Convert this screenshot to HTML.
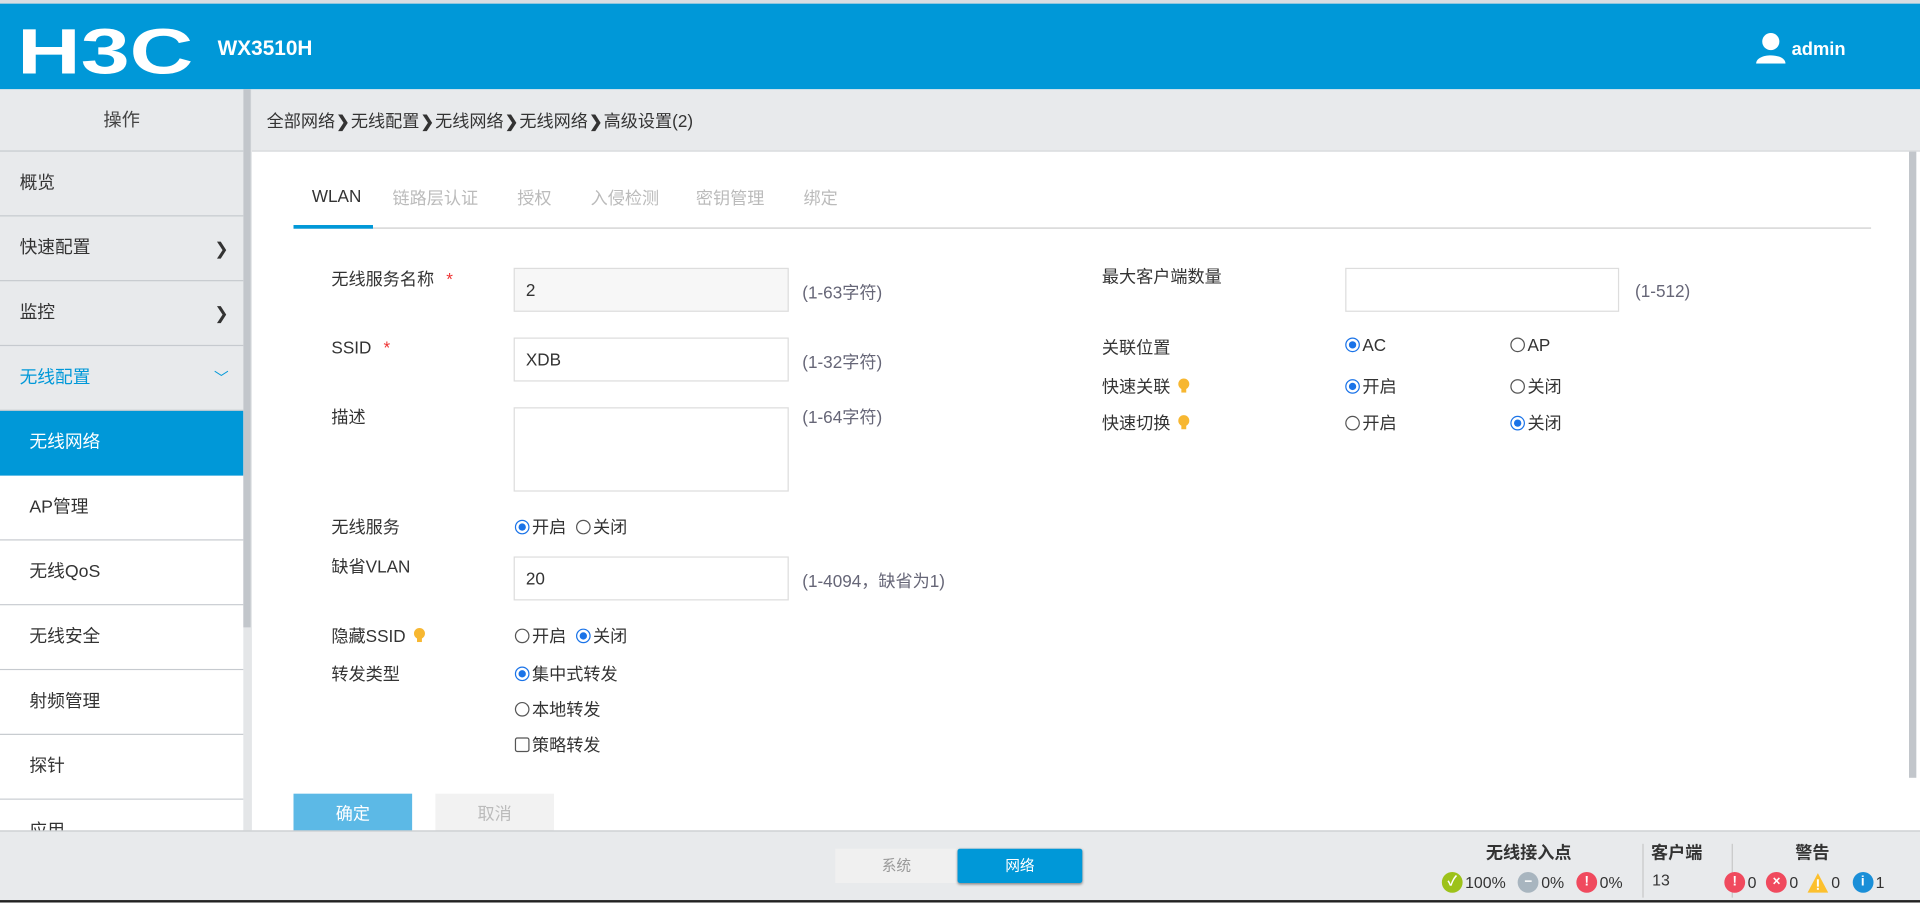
<!DOCTYPE html>
<html><head><meta charset="utf-8"><style>
*{margin:0;padding:0;box-sizing:border-box}
html,body{width:1920px;height:903px;overflow:hidden;background:#fff}
#s{width:1570px;height:738px;transform:scale(1.22293);transform-origin:0 0;position:relative;font-family:"Liberation Sans","Noto Sans CJK SC",sans-serif;font-size:14px;color:#333}
.a{position:absolute;white-space:nowrap}
.top{left:0;top:0;width:1570px;height:73px;background:#0098d8;border-top:3px solid #d8dde2}
.side{left:0;top:73px;width:199px;height:606px;background:#e8eaec}
.it{position:absolute;left:0;width:199px;height:53px;border-bottom:1px solid #c6cacf;line-height:53px;padding-left:16px;font-size:14.5px}
.sub{background:#fff;padding-left:24px}
.chev{position:absolute;right:12px;top:0;font-size:14px}
.inp{position:absolute;border:1px solid #ddd;background:#fff;padding-left:9px;font-size:14px}
.hint{color:#667;font-size:14px}
.r{display:inline-block;width:12px;height:12px;border:1px solid #555;border-radius:50%;vertical-align:-1px;margin-right:2px;position:relative;background:#fff}
.r.on{border-color:#1a73e8}
.r.on:after{content:"";position:absolute;left:2px;top:2px;width:6px;height:6px;border-radius:50%;background:#1a73e8}
.bulb{display:inline-block;width:10px;height:13px;vertical-align:-1px;margin-left:6px}
.row{display:flex;align-items:center;font-size:13px}
.ic{display:inline-block;width:17px;height:17px;border-radius:50%;color:#fff;text-align:center;font-size:11px;line-height:17px;font-weight:bold;margin-right:2px;flex:none}
.bc b{font-size:13px;margin:0 1px}
</style></head><body><div id="s">
<div class="a top">
 <svg class="a" style="left:14px;top:17px" width="146" height="44" viewBox="0 0 146 44"><text x="0" y="40" font-family="Liberation Sans" font-weight="bold" font-size="52" fill="#fff" textLength="144" lengthAdjust="spacingAndGlyphs">H3C</text></svg>
 <div class="a" style="left:178px;top:27px;font-size:17px;font-weight:bold;color:#fff">WX3510H</div>
 <svg class="a" style="left:1435px;top:23px" width="26" height="26" viewBox="0 0 26 26"><circle cx="13" cy="8" r="7" fill="#fff"/><path d="M1 26 C1 17 25 17 25 26Z" fill="#fff"/></svg>
 <div class="a" style="left:1465px;top:29px;font-size:15px;font-weight:bold;color:#fff">admin</div>
</div>
<div class="a side">
 <div class="it" style="top:0;height:51px;line-height:51px;text-align:center;padding:0;font-size:15px;color:#444">操作</div>
 <div class="it" style="top:51px">概览</div>
 <div class="it" style="top:104px">快速配置<span class="chev">❯</span></div>
 <div class="it" style="top:157px">监控<span class="chev">❯</span></div>
 <div class="it" style="top:210px;color:#0098d8">无线配置<span class="chev" style="font-size:12px">﹀</span></div>
 <div class="it sub" style="top:263px;background:#0098d8;color:#fff;border:0">无线网络</div>
 <div class="it sub" style="top:316px">AP管理</div>
 <div class="it sub" style="top:369px">无线QoS</div>
 <div class="it sub" style="top:422px">无线安全</div>
 <div class="it sub" style="top:475px">射频管理</div>
 <div class="it sub" style="top:528px">探针</div>
 <div class="it sub" style="top:581px">应用</div>
</div>
<div class="a" style="left:199px;top:73px;width:7px;height:606px;background:#e4e6e8"></div>
<div class="a" style="left:199px;top:73px;width:6px;height:440px;background:#c2c6cb"></div>
<div class="a bc" style="left:206px;top:73px;width:1364px;height:51px;background:#e8eaec;border-bottom:1px solid #d6d8db;padding:16px 12px;font-size:14px">全部网络<b>❯</b>无线配置<b>❯</b>无线网络<b>❯</b>无线网络<b>❯</b>高级设置(2)</div>
<div class="a" style="left:1561px;top:124px;width:6px;height:512px;background:#c2c6cb"></div>
<div class="a" style="left:255px;top:152px;font-size:14px">WLAN</div>
<div class="a" style="left:321px;top:152px;color:#bbb">链路层认证</div>
<div class="a" style="left:423px;top:152px;color:#bbb">授权</div>
<div class="a" style="left:483px;top:152px;color:#bbb">入侵检测</div>
<div class="a" style="left:569px;top:152px;color:#bbb">密钥管理</div>
<div class="a" style="left:657px;top:152px;color:#bbb">绑定</div>
<div class="a" style="left:240px;top:186px;width:1290px;height:1px;background:#ccc"></div>
<div class="a" style="left:240px;top:184px;width:65px;height:3px;background:#0098d8"></div>

<div class="a" style="left:271px;top:218px">无线服务名称 <span style="color:#e33;margin-left:6px">*</span></div>
<div class="inp" style="left:420px;top:219px;width:225px;height:36px;line-height:34px;background:#f7f7f7">2</div>
<div class="a hint" style="left:656px;top:229px">(1-63字符)</div>
<div class="a" style="left:271px;top:276px">SSID <span style="color:#e33;margin-left:6px">*</span></div>
<div class="inp" style="left:420px;top:276px;width:225px;height:36px;line-height:34px">XDB</div>
<div class="a hint" style="left:656px;top:286px">(1-32字符)</div>
<div class="a" style="left:271px;top:331px">描述</div>
<div class="inp" style="left:420px;top:333px;width:225px;height:69px"></div>
<div class="a hint" style="left:656px;top:331px">(1-64字符)</div>
<div class="a" style="left:271px;top:421px">无线服务</div>
<div class="a" style="left:421px;top:421px"><span class="r on"></span>开启 <span class="r" style="margin-left:4px"></span>关闭</div>
<div class="a" style="left:271px;top:453px">缺省VLAN</div>
<div class="inp" style="left:420px;top:455px;width:225px;height:36px;line-height:34px">20</div>
<div class="a hint" style="left:656px;top:465px">(1-4094，缺省为1)</div>
<div class="a" style="left:271px;top:510px">隐藏SSID<svg class="bulb" viewBox="0 0 10 13"><circle cx="5" cy="5" r="4.5" fill="#f7b731"/><rect x="3" y="9" width="4" height="3" fill="#f7b731"/></svg></div>
<div class="a" style="left:421px;top:510px"><span class="r"></span>开启 <span class="r on" style="margin-left:4px"></span>关闭</div>
<div class="a" style="left:271px;top:541px">转发类型</div>
<div class="a" style="left:421px;top:541px"><span class="r on"></span>集中式转发</div>
<div class="a" style="left:421px;top:570px"><span class="r"></span>本地转发</div>
<div class="a" style="left:421px;top:599px"><span class="r" style="border-radius:2px"></span>策略转发</div>
<div class="a" style="left:240px;top:649px;width:97px;height:32px;background:#5cb9e6;color:#fff;text-align:center;line-height:32px">确定</div>
<div class="a" style="left:356px;top:649px;width:97px;height:32px;background:#f2f2f2;color:#bbb;text-align:center;line-height:32px">取消</div>

<div class="a" style="left:901px;top:216px">最大客户端数量</div>
<div class="inp" style="left:1100px;top:219px;width:224px;height:36px"></div>
<div class="a hint" style="left:1337px;top:230px">(1-512)</div>
<div class="a" style="left:901px;top:274px">关联位置</div>
<div class="a" style="left:1100px;top:274px"><span class="r on"></span>AC</div>
<div class="a" style="left:1235px;top:274px"><span class="r"></span>AP</div>
<div class="a" style="left:901px;top:306px">快速关联<svg class="bulb" viewBox="0 0 10 13"><circle cx="5" cy="5" r="4.5" fill="#f7b731"/><rect x="3" y="9" width="4" height="3" fill="#f7b731"/></svg></div>
<div class="a" style="left:1100px;top:306px"><span class="r on"></span>开启</div>
<div class="a" style="left:1235px;top:306px"><span class="r"></span>关闭</div>
<div class="a" style="left:901px;top:336px">快速切换<svg class="bulb" viewBox="0 0 10 13"><circle cx="5" cy="5" r="4.5" fill="#f7b731"/><rect x="3" y="9" width="4" height="3" fill="#f7b731"/></svg></div>
<div class="a" style="left:1100px;top:336px"><span class="r"></span>开启</div>
<div class="a" style="left:1235px;top:336px"><span class="r on"></span>关闭</div>

<div class="a" style="left:0;top:679px;width:1570px;height:57px;background:#e8eaec;border-top:1px solid #c8cbce"></div>
<div class="a" style="left:0;top:736px;width:1570px;height:2px;background:#222"></div>
<div class="a" style="left:683px;top:694px;width:100px;height:28px;background:#f0f0f0;color:#999;text-align:center;line-height:28px;font-size:12px">系统</div>
<div class="a" style="left:783px;top:694px;width:102px;height:28px;background:#0098d8;color:#fff;text-align:center;line-height:28px;font-size:12px;border-radius:2px;box-shadow:0 1px 2px #888">网络</div>
<div class="a" style="left:1215px;top:687px;font-weight:bold;font-size:14px">无线接入点</div>
<div class="a row" style="left:1179px;top:713px"><span class="ic" style="background:#9dc21a">✓</span>100%<span class="ic" style="background:#a8b5bf;margin-left:10px">−</span>0%<span class="ic" style="background:#f04a5e;margin-left:10px">!</span>0%</div>
<div class="a" style="left:1343px;top:690px;width:1px;height:44px;background:#c8c8c8"></div>
<div class="a" style="left:1350px;top:687px;font-weight:bold;font-size:14px">客户端</div>
<div class="a" style="left:1351px;top:712px;font-size:13px">13</div>
<div class="a" style="left:1416px;top:690px;width:1px;height:44px;background:#c8c8c8"></div>
<div class="a" style="left:1468px;top:687px;font-weight:bold;font-size:14px">警告</div>
<div class="a row" style="left:1410px;top:713px"><span class="ic" style="background:#f04a5e">!</span>0<span class="ic" style="background:#f04a5e;margin-left:8px">×</span>0<svg style="margin-left:8px;margin-right:2px" width="17" height="16" viewBox="0 0 17 16"><path d="M8.5 0 L17 16 H0Z" fill="#fcc02e"/><rect x="7.7" y="5" width="1.6" height="6" fill="#fff"/><rect x="7.7" y="12" width="1.6" height="1.6" fill="#fff"/></svg>0<span class="ic" style="background:#1a8fd8;margin-left:10px">i</span>1</div>
</div></body></html>
